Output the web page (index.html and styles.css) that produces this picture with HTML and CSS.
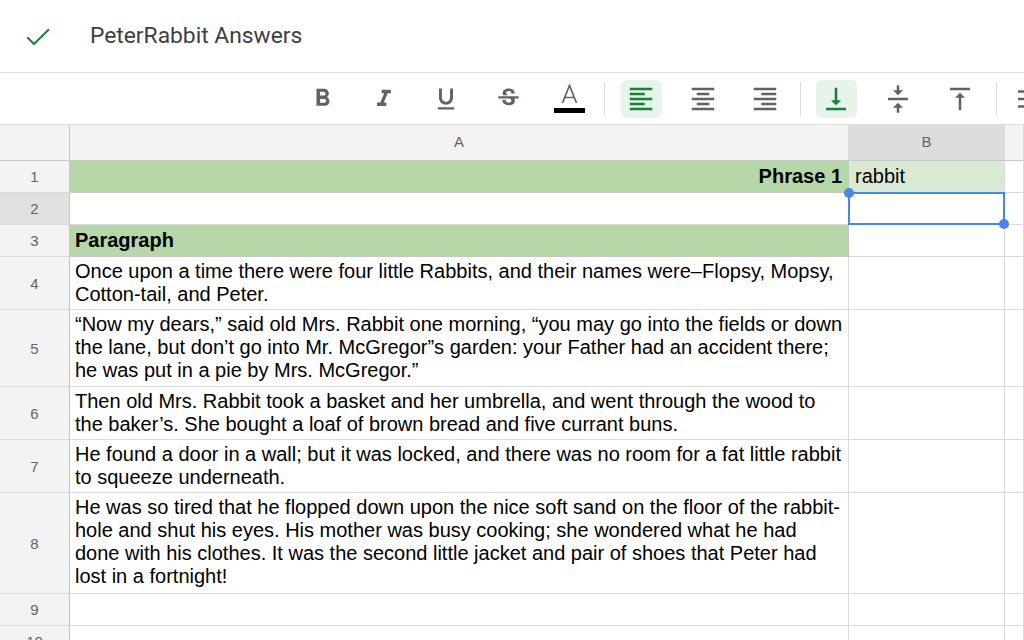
FILE: index.html
```html
<!DOCTYPE html>
<html>
<head>
<meta charset="utf-8">
<link rel="stylesheet" href="styles.css">
</head>
<body>
<div class="appbar">
  <svg class="check" width="24" height="18" viewBox="0 0 24 18"><polyline points="1.2,9.2 8,16 23,1.2" fill="none" stroke="#188038" stroke-width="2"/></svg>
  <div class="title">PeterRabbit Answers</div>
</div>
<div class="toolbar">
  <div class="group">
    <div class="btn"><svg width="29" height="29" viewBox="0 0 24 24"><path fill="#5f6368" d="M15.6 10.79c.97-.67 1.650-1.770 1.650-2.79 0-2.26-1.75-4-4-4H7v14h7.04c2.09 0 3.710-1.7 3.710-3.79 0-1.52-.86-2.82-2.15-3.42zM10 6.5h3c.83 0 1.5.67 1.5 1.5s-.67 1.5-1.5 1.5h-3v-3zm3.5 9H10v-3h3.5c.83 0 1.5.67 1.5 1.5s-.67 1.5-1.5 1.5z"/></svg></div>
    <div class="btn"><svg width="28" height="28" viewBox="0 0 24 24"><path fill="#5f6368" d="M10 4v3h2.21l-3.42 8H6v3h8v-3h-2.21l3.42-8H18V4z"/></svg></div>
    <div class="btn"><svg width="28" height="28" viewBox="0 0 24 24"><path fill="#5f6368" d="M12 17c3.31 0 6-2.69 6-6V3h-2.5v8c0 1.93-1.57 3.5-3.5 3.5S8.5 12.93 8.5 11V3H6v8c0 3.31 2.69 6 6 6zm-7 2v2h14v-2H5z"/></svg></div>
    <div class="btn"><svg width="27" height="27" viewBox="0 0 24 24"><path fill="#5f6368" d="M6.85 7.08C6.85 4.37 9.45 3 12.24 3c1.64 0 3 .49 3.9 1.28.77.65 1.46 1.73 1.46 3.24h-3.01c0-.31-.05-.59-.15-.85-.29-.86-1.2-1.280-2.25-1.28-1.86 0-2.34 1.02-2.34 1.7 0 .48.25.88.74 1.21.38.25.77.48 1.41.7H7.39c-.21-.34-.54-.89-.54-1.920zM21 12v-2H3v2h9.62c1.15.45 1.96.75 1.96 1.97 0 1-.81 1.67-2.28 1.67-1.54 0-2.93-.54-2.93-2.51H6.4c0 .55.08 1.13.24 1.58.81 2.29 3.29 3.3 5.67 3.3 2.27 0 5.3-.89 5.3-4.05 0-.3-.01-1.16-.48-1.94H21V12z"/></svg></div>
    <div class="btn"><svg width="32" height="30" viewBox="0 0 32 30"><path d="M8.5 19 L15.5 1.5 L22.5 19 M11 13.5 H20" fill="none" stroke="#5f6368" stroke-width="1.7"/><rect x="0" y="24" width="31" height="5" fill="#000"/></svg></div>
  </div>
  <div class="sep s1"></div>
  <div class="group">
    <div class="btn"><div class="hl"><svg width="30" height="30" viewBox="0 0 24 24"><path fill="#188038" d="M15 15H3v2h12v-2zm0-8H3v2h12V7zM3 13h18v-2H3v2zm0 8h18v-2H3v2zM3 3v2h18V3H3z"/></svg></div></div>
    <div class="btn"><svg width="30" height="30" viewBox="0 0 24 24"><path fill="#5f6368" d="M7 15v2h10v-2H7zm-4 6h18v-2H3v2zm0-8h18v-2H3v2zm4-6v2h10V7H7zM3 3v2h18V3H3z"/></svg></div>
    <div class="btn"><svg width="30" height="30" viewBox="0 0 24 24"><path fill="#5f6368" d="M3 21h18v-2H3v2zm6-4h12v-2H9v2zm-6-4h18v-2H3v2zm6-4h12V7H9v2zM3 3v2h18V3H3z"/></svg></div>
  </div>
  <div class="sep s2"></div>
  <div class="group">
    <div class="btn"><div class="hl"><svg width="30" height="30" viewBox="0 0 24 24"><path fill="#188038" d="M16 13h-3V3h-2v10H8l4 4 4-4zM4 19v2h16v-2H4z"/></svg></div></div>
    <div class="btn"><svg width="30" height="30" viewBox="0 0 24 24"><path fill="#5f6368" d="M8 19h3v4h2v-4h3l-4-4-4 4zm8-14h-3V1h-2v4H8l4 4 4-4zM4 11v2h16v-2H4z"/></svg></div>
    <div class="btn"><svg width="30" height="30" viewBox="0 0 24 24"><path fill="#5f6368" d="M8 11h3v10h2V11h3l-4-4-4 4zM4 3v2h16V3H4z"/></svg></div>
  </div>
  <div class="sep s3"></div>
  <div class="wrap"><svg width="30" height="30" viewBox="0 0 24 24"><path fill="#5f6368" d="M4 19h6v-2H4v2zM20 5H4v2h16V5zm-3 6H4v2h13.25c1.1 0 2 .9 2 2s-.9 2-2 2H15v-2l-3 3 3 3v-2h2c2.21 0 4-1.79 4-4s-1.79-4-4-4z"/></svg></div>
</div>
<div class="sheet">
  <div class="hd corner"></div><div class="hd colh">A</div><div class="hd colh sel">B</div><div class="hd colh"></div>

  <div class="rh">1</div><div class="c green right bold">Phrase 1</div><div class="c lgreen">rabbit</div><div class="c"></div>

  <div class="rh sel">2</div><div class="c"></div><div class="c active"><div class="selbox"><span class="h tl"></span><span class="h br"></span></div></div><div class="c"></div>

  <div class="rh">3</div><div class="c green bold">Paragraph</div><div class="c"></div><div class="c"></div>

  <div class="rh">4</div><div class="c txt">Once upon a time there were four little Rabbits, and their names were–Flopsy, Mopsy,<br>Cotton-tail, and Peter.</div><div class="c"></div><div class="c"></div>

  <div class="rh">5</div><div class="c txt">“Now my dears,” said old Mrs. Rabbit one morning, “you may go into the fields or down<br>the lane, but don’t go into Mr. McGregor”s garden: your Father had an accident there;<br>he was put in a pie by Mrs. McGregor.”</div><div class="c"></div><div class="c"></div>

  <div class="rh">6</div><div class="c txt">Then old Mrs. Rabbit took a basket and her umbrella, and went through the wood to<br>the baker’s. She bought a loaf of brown bread and five currant buns.</div><div class="c"></div><div class="c"></div>

  <div class="rh">7</div><div class="c txt">He found a door in a wall; but it was locked, and there was no room for a fat little rabbit<br>to squeeze underneath.</div><div class="c"></div><div class="c"></div>

  <div class="rh">8</div><div class="c txt">He was so tired that he flopped down upon the nice soft sand on the floor of the rabbit-<br>hole and shut his eyes. His mother was busy cooking; she wondered what he had<br>done with his clothes. It was the second little jacket and pair of shoes that Peter had<br>lost in a fortnight!</div><div class="c"></div><div class="c"></div>

  <div class="rh">9</div><div class="c"></div><div class="c"></div><div class="c"></div>

  <div class="rh">10</div><div class="c"></div><div class="c"></div><div class="c"></div>
</div>
</body>
</html>
```

FILE: styles.css
```css
html, body {
  margin: 0;
  padding: 0;
  background: #fff;
  overflow: hidden;
  width: 1024px;
  height: 640px;
}
body {
  font-family: "Liberation Sans", Arial, sans-serif;
  color: #000;
}
.appbar {
  height: 72px;
  border-bottom: 1px solid #e0e0e0;
  display: flex;
  align-items: center;
}
.check {
  margin-left: 26px;
  margin-top: 1px;
}
.title {
  margin-left: 40px;
  margin-top: -2px;
  font-family: Roboto, "Noto Sans", sans-serif;
  font-size: 22.8px;
  color: #3c4043;
}
.toolbar {
  height: 51px;
  border-bottom: 1px solid #e0e0e0;
  display: flex;
  align-items: center;
  padding-left: 291px;
  overflow: hidden;
}
.group {
  display: flex;
}
.btn {
  width: 62px;
  height: 51px;
  display: flex;
  align-items: center;
  justify-content: center;
  flex: none;
}
.btn svg { display: block; }
.hl {
  width: 41px;
  height: 38px;
  border-radius: 6px;
  background: #e6f4ea;
  display: flex;
  align-items: center;
  justify-content: center;
}
.sep {
  width: 1px;
  height: 34px;
  background: #dadce0;
  flex: none;
}
.s1 { margin: 0 5px 0 3px; }
.s2 { margin: 0 4px 0 4px; }
.s3 { margin: 0 0 0 5px; }
.wrap {
  flex: none;
  margin-left: 16px;
  display: flex;
}
.sheet {
  display: grid;
  grid-template-columns: 70px 779px 156px 1fr;
  grid-template-rows: 36px 32px 32px 32px 53px 77px 53px 53px 101px 32px 32px;
}
.sheet > div {
  box-sizing: border-box;
  border-right: 1px solid #dadada;
  border-bottom: 1px solid #dadada;
}
.hd {
  background: #f3f3f3;
  color: #5f6368;
  font-size: 15px;
  display: flex;
  align-items: center;
  justify-content: center;
  padding-bottom: 2px;
  border-bottom-color: #c8c8c8 !important;
}
.corner { border-right-color: #c4c4c4 !important; }
.hd.sel { background: #dddddd; }
.rh {
  background: #f3f3f3;
  color: #5f6368;
  font-size: 15px;
  display: flex;
  align-items: center;
  justify-content: center;
  border-right-color: #c4c4c4 !important;
}
.rh.sel { background: #e0e0e0; }
.c {
  font-size: 20px;
  line-height: 23px;
  display: flex;
  align-items: flex-end;
  padding: 0 6px 4px 5px;
  white-space: nowrap;
}
.txt {
  display: block;
  padding-top: 3px;
  padding-bottom: 0;
}
.green { background: #b6d7a8; border-bottom-color: #c2c9bf !important; border-right-color: #c2c9bf !important; }
.lgreen { background: #d9ead3; padding-left: 6px; }
.right { justify-content: flex-end; }
.bold { font-weight: bold; }
.active { position: relative; }
.selbox {
  position: absolute;
  top: -1px;
  left: -1px;
  right: -1px;
  bottom: -1px;
  border: 2px solid #4a86e8;
}
.h {
  position: absolute;
  width: 10px;
  height: 10px;
  border-radius: 50%;
  background: #4a86e8;
}
.tl { top: -6px; left: -6px; }
.br { bottom: -6px; right: -6px; }
```
